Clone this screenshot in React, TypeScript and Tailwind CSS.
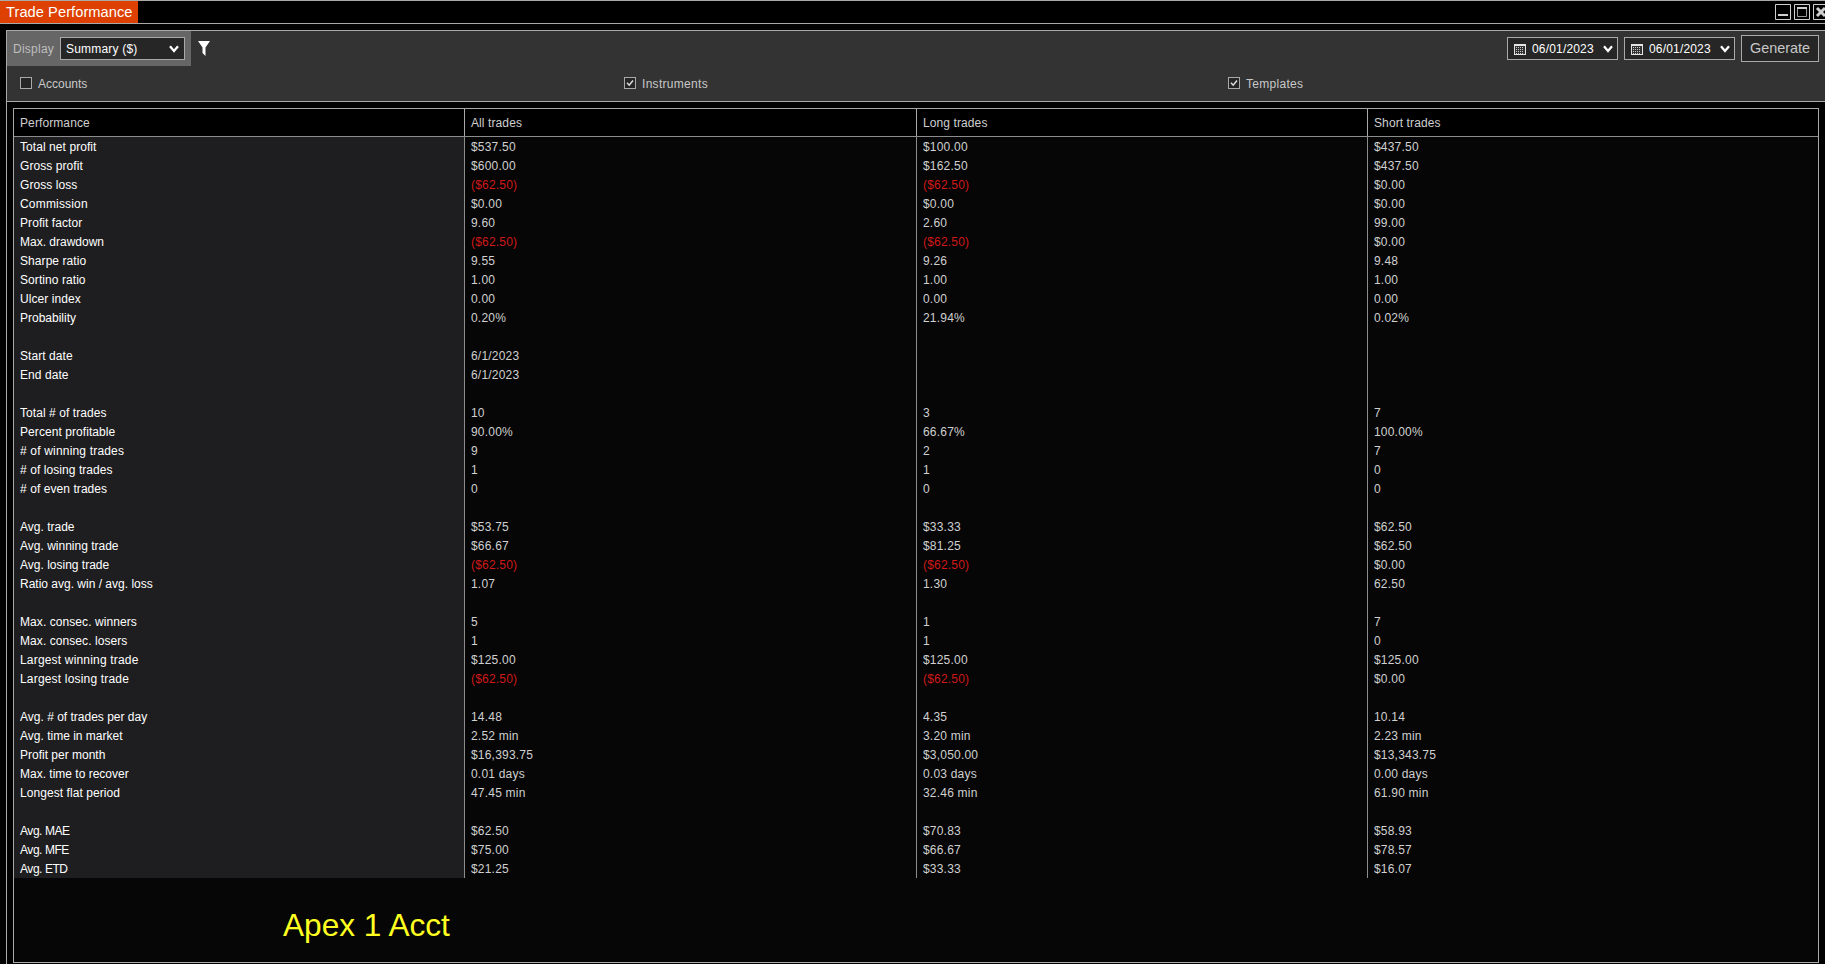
const rows: string[][] = [
  ["Total net profit", "$537.50", "$100.00", "$437.50"],
  ["Gross profit", "$600.00", "$162.50", "$437.50"],
  ["Gross loss", "($62.50)", "($62.50)", "$0.00"],
  ["Commission", "$0.00", "$0.00", "$0.00"],
  ["Profit factor", "9.60", "2.60", "99.00"],
  ["Max. drawdown", "($62.50)", "($62.50)", "$0.00"],
  ["Sharpe ratio", "9.55", "9.26", "9.48"],
  ["Sortino ratio", "1.00", "1.00", "1.00"],
  ["Ulcer index", "0.00", "0.00", "0.00"],
  ["Probability", "0.20%", "21.94%", "0.02%"],
  [],
  ["Start date", "6/1/2023", "", ""],
  ["End date", "6/1/2023", "", ""],
  [],
  ["Total # of trades", "10", "3", "7"],
  ["Percent profitable", "90.00%", "66.67%", "100.00%"],
  ["# of winning trades", "9", "2", "7"],
  ["# of losing trades", "1", "1", "0"],
  ["# of even trades", "0", "0", "0"],
  [],
  ["Avg. trade", "$53.75", "$33.33", "$62.50"],
  ["Avg. winning trade", "$66.67", "$81.25", "$62.50"],
  ["Avg. losing trade", "($62.50)", "($62.50)", "$0.00"],
  ["Ratio avg. win / avg. loss", "1.07", "1.30", "62.50"],
  [],
  ["Max. consec. winners", "5", "1", "7"],
  ["Max. consec. losers", "1", "1", "0"],
  ["Largest winning trade", "$125.00", "$125.00", "$125.00"],
  ["Largest losing trade", "($62.50)", "($62.50)", "$0.00"],
  [],
  ["Avg. # of trades per day", "14.48", "4.35", "10.14"],
  ["Avg. time in market", "2.52 min", "3.20 min", "2.23 min"],
  ["Profit per month", "$16,393.75", "$3,050.00", "$13,343.75"],
  ["Max. time to recover", "0.01 days", "0.03 days", "0.00 days"],
  ["Longest flat period", "47.45 min", "32.46 min", "61.90 min"],
  [],
  ["Avg. MAE", "$62.50", "$70.83", "$58.93"],
  ["Avg. MFE", "$75.00", "$66.67", "$78.57"],
  ["Avg. ETD", "$21.25", "$33.33", "$16.07"],
];

const columns = ["Performance", "All trades", "Long trades", "Short trades"];

const labelTracking = (label = "") => {
  if (/^Avg\. (MAE|MFE|ETD)$/.test(label)) return "tracking-[-0.45px]";
  if (/^(Largest|# of winning|Commission)/.test(label)) return "tracking-[0.18px]";
  if (/^(Avg|Max\. d|Max\. t|Prob|Profit per|Ratio)/.test(label)) return "tracking-[0px]";
  return "tracking-[0.07px]";
};

const Chevron = () => (
  <svg width="10" height="8" viewBox="0 0 10 8" fill="none" stroke="#fff" strokeWidth="2.2">
    <path d="M1 1.2 L5 6 L9 1.2" />
  </svg>
);

const CalendarIcon = () => (
  <svg width="12" height="11" viewBox="0 0 12 11" shapeRendering="crispEdges">
    <path d="M0 0h12v11H0z" fill="#e4e4e4" />
    <path d="M1 2h10v8H1z" fill="#333" />
    <path d="M2 3.5h8M2 5.5h8M2 7.5h8M2 9.5h8" stroke="#ccc" strokeDasharray="1 1" />
  </svg>
);

const DateSelect = ({ value }: { value: string }) => (
  <div className="flex h-[23px] w-[111px] items-center border border-[#a9a9a9] bg-[#262626] pt-px pl-[6px] text-white">
    <CalendarIcon />
    <span className="ml-[6px] w-[71px] leading-[22px] tracking-[0.17px]">{value}</span>
    <div className="shrink-0">
      <Chevron />
    </div>
  </div>
);

const Filter = ({ label, checked }: { label: string; checked?: boolean }) => (
  <div className="flex w-[604px] shrink-0 items-center">
    <div className="flex size-3 items-center justify-center border border-[#a9a9a9] bg-[#262626]">
      {checked && (
        <svg width="8" height="8" viewBox="0 0 8 8" fill="none" stroke="#ddd" strokeWidth="1.5">
          <path d="M1 3.8 L3.2 6.2 L7 1.5" />
        </svg>
      )}
    </div>
    <span className={`ml-[6px] pt-[2px] ${checked ? "tracking-[0.3px]" : ""}`}>{label}</span>
  </div>
);

const TitleBar = () => (
  <div className="flex h-6 justify-between border-y border-[#a9a9a9] bg-black">
    <div className="w-[138px] bg-[#dd4000] pl-[6px] text-[14.67px] leading-[22px] tracking-[0.05px] text-white">Trade Performance</div>
    <div className="-mr-1 flex gap-[3px] pt-[3px]">
      <svg width="16" height="16" fill="none" stroke="#d0d0d0">
        <path d="M.5.5h15v15H.5z" />
        <path d="M3 11h10" strokeWidth="2" />
      </svg>
      <svg width="16" height="16" fill="none" stroke="#d0d0d0">
        <path d="M.5.5h15v15H.5z" />
        <path d="M3.5 3.5h9v9h-9z" stroke="#999" />
        <path d="M3 4h10" strokeWidth="2" />
      </svg>
      <svg width="16" height="16" fill="none" stroke="#d0d0d0">
        <path d="M.5.5h15v15H.5z" />
        <path d="M4 4l8 8M12 4l-8 8" strokeWidth="3" />
      </svg>
    </div>
  </div>
);

const Toolbar = () => (
  <div className="h-[70px] bg-[#333] text-[#c8c8c8]">
    <div className="flex h-[35px] justify-between">
      <div className="flex items-center">
        <div className="flex h-[35px] w-[184px] items-center bg-[#666] pl-[6px]">
          <span className="w-[47px] tracking-[0.25px] text-[#bebebe]">Display</span>
          <div className="flex h-[23px] w-[125px] items-center justify-between border border-[#a9a9a9] bg-[#262626] pr-[5px] pl-[5px] text-white">
            <span className="tracking-[0.2px]">Summary ($)</span>
            <Chevron />
          </div>
        </div>
        <svg className="ml-[7px]" width="12" height="15" fill="#fff">
          <path d="M0 0h12L7.5 6.5V15L4.5 12V6.5z" />
        </svg>
      </div>
      <div className="flex items-center gap-[6px] pr-[6px]">
        <DateSelect value="06/01/2023" />
        <DateSelect value="06/01/2023" />
        <div className="flex h-[27px] w-[78px] items-center justify-center border border-[#a9a9a9] bg-[#262626] pt-px text-[14.4px]">Generate</div>
      </div>
    </div>
    <div className="flex h-[35px] items-center pb-[1px] pl-[13px]">
      <Filter label="Accounts" />
      <Filter label="Instruments" checked />
      <Filter label="Templates" checked />
    </div>
  </div>
);

const App = () => {
  return (
    <div className="flex h-[964px] w-[1825px] flex-col overflow-hidden bg-[#020202] font-['Liberation_Sans',Arial,sans-serif] text-[12px]">
      <TitleBar />
      <div className="mt-[6px] ml-[6px] flex-1 overflow-hidden border-t border-l border-[#a9a9a9]">
        <Toolbar />
        <div className="border-t border-[#a9a9a9] pt-[6px] pl-[6px]">
          <div className="h-[855px] w-[1806px] border border-[#a9a9a9] bg-[#060606]">
            <div className="grid h-[28px] grid-cols-[451px_452px_451px_450px] border-b border-[#8c8c8c] bg-black">
              {columns.map((name) => (
                <div key={name} className="border-r border-[#a9a9a9] pt-px pl-[6px] leading-[26px] tracking-[0.1px] text-[#cfcfcf] last:border-r-0">
                  {name}
                </div>
              ))}
            </div>
            {rows.map((row, i) => (
              <div key={i} className="grid h-[19px] grid-cols-[451px_452px_451px_450px] leading-[18px]">
                <div className={`border-r border-[#8c8c8c] bg-[#1e1e20] pt-px pl-[6px] text-white ${labelTracking(row[0])}`}>{row[0]}</div>
                {[1, 2, 3].map((col) => (
                  <div
                    key={col}
                    className={`border-[#8c8c8c] pt-px pl-[6px] tracking-[0.2px] ${col < 3 ? "border-r" : ""} ${row[col]?.startsWith("(") ? "text-[#d01818]" : "text-[#d0d0d0]"}`}
                  >
                    {row[col]}
                  </div>
                ))}
              </div>
            ))}
            <p className="mt-[29px] ml-[269px] text-[31.6px] leading-[36px] text-[#ffff20]">Apex 1 Acct</p>
          </div>
        </div>
      </div>
    </div>
  );
};

export default App;
